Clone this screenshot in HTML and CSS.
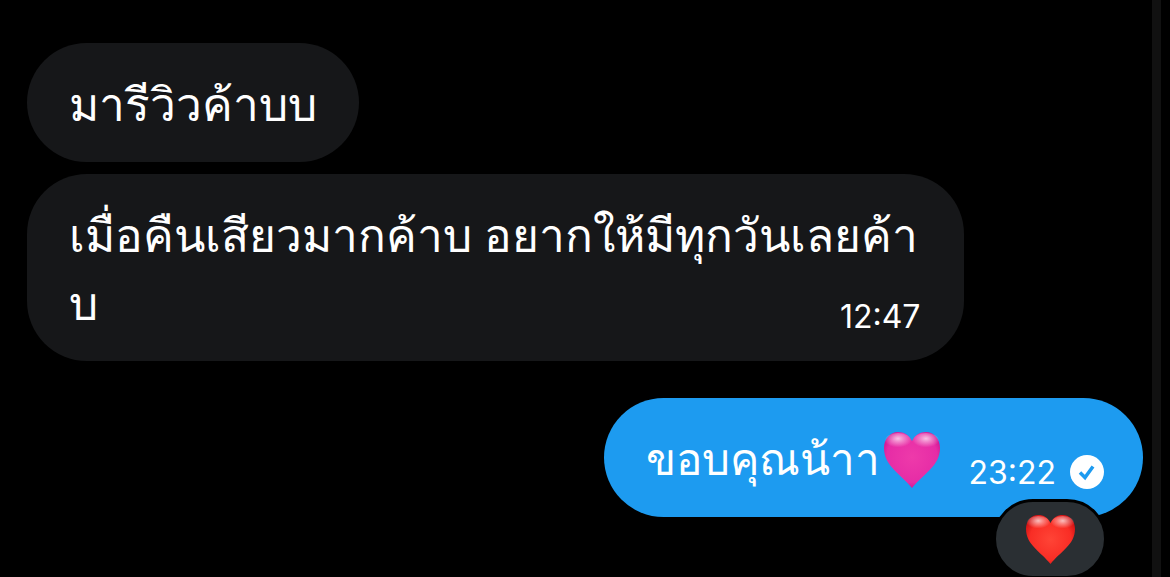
FILE: index.html
```html
<!DOCTYPE html>
<html lang="th">
<head>
<meta charset="utf-8">
<meta name="viewport" content="width=device-width, initial-scale=1">
<title>ข้อความ</title>
<link rel="stylesheet" href="styles.css">
</head>
<body>
<main class="chat">
  <div class="bubble received">
    <p class="text">มารีวิวค้าบบ</p>
  </div>
  <div class="bubble received">
    <p class="text">เมื่อคืนเสียวมากค้าบ อยากให้มีทุกวันเลยค้าบ<time class="time time-float">12:47</time></p>
  </div>
  <div class="bubble sent">
    <p class="text">ขอบคุณน้าา</p>
    <svg class="heart" viewBox="0 0 56 56" role="img" aria-label="หัวใจสีชมพู">
      <defs>
        <radialGradient id="pink" cx="0.5" cy="0.45" r="0.6">
          <stop offset="0" stop-color="#ee3aaa"/>
          <stop offset="0.75" stop-color="#e62ca6"/>
          <stop offset="1" stop-color="#c80e8c"/>
        </radialGradient>
        <radialGradient id="shine" cx="0.5" cy="0.35" r="0.55">
          <stop offset="0" stop-color="#fff" stop-opacity="0.7"/>
          <stop offset="0.4" stop-color="#fff" stop-opacity="0.4"/>
          <stop offset="1" stop-color="#fff" stop-opacity="0"/>
        </radialGradient>
      </defs>
      <path fill="url(#pink)" d="M28 9C25 3 20 0 14 0C6 0 0 7 0 16C0 34 17 42 28 56C39 42 56 34 56 16C56 7 50 0 42 0C36 0 31 3 28 9Z"/>
      <ellipse cx="14" cy="9" rx="13" ry="8" fill="url(#shine)"/>
      <ellipse cx="42" cy="9" rx="13" ry="8" fill="url(#shine)"/>
    </svg>
    <time class="time time-sent">23:22</time>
    <svg class="check" viewBox="0 0 34 34" role="img" aria-label="ส่งแล้ว">
      <circle cx="17" cy="17" r="17" fill="#fff"/>
      <path d="M10 17.500L15 22.500L23 11.500" fill="none" stroke="#1d9bf0" stroke-width="3.500"/>
    </svg>
    <button class="reaction" type="button" aria-label="หัวใจสีแดง">
      <svg class="reaction-heart" viewBox="0 0 56 56" aria-hidden="true">
        <defs>
          <radialGradient id="red" cx="0.5" cy="0.5" r="0.6">
            <stop offset="0" stop-color="#ff4436"/>
            <stop offset="0.7" stop-color="#f92d25"/>
            <stop offset="1" stop-color="#c90d10"/>
          </radialGradient>
        </defs>
        <path fill="url(#red)" d="M28 9C25 3 20 0 14 0C6 0 0 7 0 16C0 34 17 42 28 56C39 42 56 34 56 16C56 7 50 0 42 0C36 0 31 3 28 9Z"/>
        <ellipse cx="14" cy="9" rx="13" ry="8" fill="url(#shine)"/>
        <ellipse cx="42" cy="9" rx="13" ry="8" fill="url(#shine)"/>
      </svg>
    </button>
  </div>
</main>
</body>
</html>
```
FILE: styles.css
```css
* {
  box-sizing: border-box;
}

body {
  margin: 0;
  background: #000;
  color: #fff;
  font-family: "Noto Sans", sans-serif;
}

.chat {
  display: flex;
  flex-direction: column;
  gap: 12px;
  min-height: 100vh;
  margin-right: 9px;
  padding: 43px 9px 60px 27px;
  border-right: 9px solid #111;
}

.bubble {
  padding: 26px 42px 25px;
  border-radius: 60px;
}

.received {
  align-self: flex-start;
  max-width: 84%;
  background: #161719;
}

.sent {
  position: relative;
  display: flex;
  align-items: center;
  align-self: flex-end;
  margin-top: 25px;
  padding-right: 39px;
  background: #1d9bf0;
}

.text {
  margin: 0;
  font-size: 46px;
  font-weight: 500;
  line-height: 68px;
  word-break: break-all;
}

.sent .text {
  font-size: 44px;
}

.time {
  font-family: Inter, sans-serif;
  font-size: 32px;
  font-weight: 400;
}

.time-float {
  float: right;
  padding: 30px 2px 0 0;
  line-height: 38px;
}

.time-sent {
  margin-left: 28px;
  padding-top: 30px;
  line-height: 38px;
}

.heart {
  width: 56px;
  height: 56px;
  margin-top: 4px;
  margin-left: 4px;
}

.check {
  width: 34px;
  height: 34px;
  margin-top: 28px;
  margin-left: 14px;
}

.reaction {
  position: absolute;
  right: 36px;
  bottom: -62px;
  display: flex;
  align-items: center;
  justify-content: center;
  width: 114px;
  height: 80px;
  padding: 0;
  border: 3px solid #000;
  border-radius: 42px;
  background: #2a2f33;
}

.reaction-heart {
  width: 49px;
  height: 49px;
}
```
